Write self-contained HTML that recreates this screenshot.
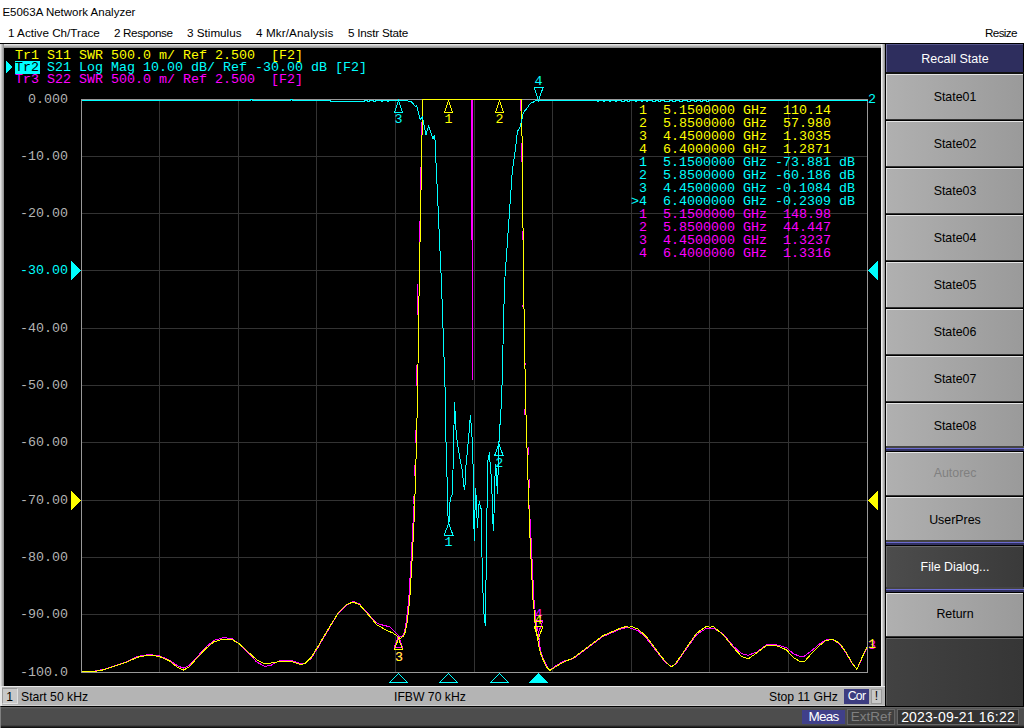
<!DOCTYPE html>
<html><head><meta charset="utf-8"><title>E5063A Network Analyzer</title>
<style>
html,body{margin:0;padding:0;background:#fff;}
body{width:1024px;height:728px;position:relative;overflow:hidden;font-family:"Liberation Sans",sans-serif;}
#root{position:absolute;left:0;top:0;width:1024px;height:728px;overflow:hidden;background:#fff;}
.abs{position:absolute;}
#title{left:2.4px;top:3.6px;font-size:11.5px;line-height:16px;color:#000;white-space:nowrap;}
.menu{top:25px;font-size:11.7px;line-height:16px;color:#000;white-space:nowrap;}
#topline{left:0;top:43px;width:1024px;height:1px;background:#000;}
#frame{left:0;top:44px;width:886px;height:662px;background:#000;}
#ftop{left:0;top:44px;width:885px;height:4px;background:linear-gradient(#eee,#888);}
#fleft{left:0;top:44px;width:4px;height:642px;background:linear-gradient(90deg,#eee,#888);}
#fleft2{left:0;top:686px;width:2px;height:20px;background:#e8e8e8;}
#fright{left:881px;top:44px;width:4px;height:646px;background:linear-gradient(90deg,#fff,#888);}
#plot{left:0;top:0;width:1024px;height:728px;}
#plot text{font-family:"Liberation Mono",monospace;font-size:13.333px;}
#status{left:2px;top:686px;width:883px;height:20px;background:#b4b4b4;border-top:1px solid #e8e8e8;box-sizing:border-box;font-size:12.2px;color:#000;border-bottom:1px solid #d0d0d0;}
#status span{position:absolute;top:2px;line-height:16px;white-space:nowrap;}
#side{left:886px;top:44px;width:137px;height:662px;background:linear-gradient(90deg,#424242,#363636);border-right:1px solid #000;box-sizing:content-box;}
#hdr{left:886px;top:44px;width:137px;height:28px;background:#2e2e5e;border-top:1px solid #55558a;border-left:1px solid #6a6a9a;box-sizing:border-box;color:#fff;font-size:12.5px;line-height:28px;text-align:center;}
.b{position:absolute;left:886px;width:137px;box-sizing:border-box;border-top:1px solid #e4e4e4;border-left:1px solid #e0e0e0;background:linear-gradient(90deg,#b0b0b0,#9a9a9a);box-shadow:0 1px 0 #333, 0 2px 0 #000;}
.bt{position:absolute;left:886px;width:138px;height:44px;color:#000;font-size:12.4px;line-height:44px;text-align:center;white-space:nowrap;}
.bt.dis{color:#808080;}
.bt.wh{color:#fff;}
.b.dk{background:linear-gradient(90deg,#4c4c4c,#3a3a3a);border-top-color:#6a6a6a;border-left-color:#6a6a6a;}
.sep{position:absolute;left:886px;width:138px;height:6px;background:#000;}
.sep i{position:absolute;left:0;top:0;width:138px;height:2px;background:#444;}
.sep b{position:absolute;left:0;top:2px;width:138px;height:3px;background:#30305e;border-top:1px solid #6a6ad0;box-sizing:border-box;}
#bbar{left:0;top:706px;width:1024px;height:22px;background:linear-gradient(#686868,#4d4d4d 2px,#4d4d4d 18px,#1a1a1a 20px,#0c0c0c 21px);border-top:1px solid #000;border-left:1px solid #808080;box-sizing:border-box;}
.tag{position:absolute;box-sizing:border-box;font-size:13.5px;line-height:14px;text-align:center;white-space:nowrap;}
</style></head><body><div id="root">
<div class="abs" id="title">E5063A Network Analyzer</div>
<div class="abs menu" style="left:8px">1 Active Ch/Trace</div>
<div class="abs menu" style="left:114px;letter-spacing:-0.37px">2 Response</div>
<div class="abs menu" style="left:187px">3 Stimulus</div>
<div class="abs menu" style="left:256px;letter-spacing:0.1px">4 Mkr/Analysis</div>
<div class="abs menu" style="left:348px;letter-spacing:-0.22px">5 Instr State</div>
<div class="abs menu" style="left:985px;letter-spacing:-0.65px">Resize</div>
<div class="abs" id="topline"></div>
<div class="abs" id="frame"></div>
<div class="abs" id="ftop"></div>
<div class="abs" id="fleft"></div>
<div class="abs" id="fright"></div>
<div class="abs" id="fleft2"></div>
<div class="abs" id="status">
<div class="abs" style="left:0px;top:1px;width:16px;height:16px;background:#c8c8c8;border:1px solid #9a9a9a;border-right-color:#e0e0e0;border-bottom-color:#e0e0e0;box-sizing:border-box"></div>
<span style="left:4.3px">1</span><span style="left:19px">Start 50 kHz</span><span style="left:392px">IFBW 70 kHz</span><span style="left:767px">Stop 11 GHz</span>
<div class="abs" style="left:842px;top:2px;width:25px;height:15px;background:#3c3c80;color:#fff;font-size:12.2px;line-height:15px;text-align:center;letter-spacing:-0.7px">Cor</div>
<div class="abs" style="left:869px;top:2px;width:11px;height:15px;background:#c8c8c8;border:1px solid #9a9a9a;box-sizing:border-box;font-size:12.2px;line-height:13px;text-align:center">!</div>
</div>
<div class="abs" id="side"></div>
<div class="abs" style="left:886px;top:72px;width:138px;height:2px;background:#111"></div>
<div class="abs" id="hdr">Recall State</div>
<div class="abs" style="left:886px;top:638px;width:137px;height:1px;background:#686868"></div><div class="abs" style="left:886px;top:639px;width:1px;height:66px;background:#5a5a5a"></div>
<div class="b" style="top:74px;height:45px"></div>
<div class="bt" style="top:75px">State01</div>
<div class="b" style="top:121px;height:45px"></div>
<div class="bt" style="top:122px">State02</div>
<div class="b" style="top:168px;height:45px"></div>
<div class="bt" style="top:169px">State03</div>
<div class="b" style="top:215px;height:45px"></div>
<div class="bt" style="top:216px">State04</div>
<div class="b" style="top:262px;height:45px"></div>
<div class="bt" style="top:263px">State05</div>
<div class="b" style="top:309px;height:45px"></div>
<div class="bt" style="top:310px">State06</div>
<div class="b" style="top:356px;height:45px"></div>
<div class="bt" style="top:357px">State07</div>
<div class="b" style="top:403px;height:43px"></div>
<div class="bt" style="top:404px">State08</div>
<div class="b" style="top:452px;height:43px"></div>
<div class="bt dis" style="top:451px">Autorec</div>
<div class="b" style="top:497px;height:44px"></div>
<div class="bt" style="top:498px">UserPres</div>
<div class="b dk" style="top:546px;height:42px"></div>
<div class="bt wh" style="top:545px">File Dialog...</div>
<div class="b" style="top:593px;height:43px"></div>
<div class="bt" style="top:592px">Return</div>
<div class="sep" style="top:446px"><i></i><b></b></div><div class="sep" style="top:540px"><i></i><b></b></div><div class="sep" style="top:587px"><i></i><b></b></div>
<div class="abs" id="bbar"></div>
<div class="tag" style="left:802px;top:710px;width:43px;height:14px;background:#40408a;color:#fff;letter-spacing:-0.7px;">Meas</div>
<div class="tag" style="left:847px;top:709px;width:48px;height:16px;background:#404040;color:#808080;border:1px solid #666;">ExtRef</div>
<div class="tag" style="left:897px;top:709px;width:122px;height:16px;background:#333;color:#fff;border:1px solid #666;font-size:14px;letter-spacing:0.2px;">2023-09-21 16:22</div>
<svg class="abs" id="plot" width="1024" height="728" viewBox="0 0 1024 728" shape-rendering="crispEdges">
<path d="M159.5 100V672M238.5 100V672M316.5 100V672M395.5 100V672M474.5 100V672M552.5 100V672M631.5 100V672M709.5 100V672M788.5 100V672M82 156.5H867M82 213.5H867M82 270.5H867M82 328.5H867M82 385.5H867M82 442.5H867M82 500.5H867M82 557.5H867M82 614.5H867" stroke="#333" fill="none"/>
<rect x="81.5" y="99.5" width="786" height="573" fill="none" stroke="#999"/>
<g stroke="#f0f" fill="none">
<polyline points="81.8,671.8 92.6,671.5 104.2,669.2 114.2,666.0 125.8,662.0 137.4,656.6 149.0,654.4 159.0,655.8 169.0,659.8 177.3,665.6 183.1,668.2 188.9,665.6 195.5,658.7 205.5,647.6 213.8,640.4 223.8,637.6 232.0,638.6 239.5,644.4 246.6,651.8 256.6,661.9 264.9,666.4 271.5,665.0 279.8,660.6 291.5,660.6 299.8,663.2 304.7,663.4 311.4,658.2 318.0,647.4 326.3,633.3 338.0,613.6 346.3,605.3 352.9,601.4 359.5,604.0 367.8,613.4 377.0,623.2 380.0,624.5 384.8,625.5 390.3,627.2 392.4,629.6 397.9,634.8 399.9,636.8 402.6,636.0 403.7,634.4 404.4,631.7 405.4,627.2 406.5,620.0 407.9,607.0 409.0,595.0 410.7,566.6 413.0,523.0 414.6,495.8"/>
<polyline points="529.3,505.0 531.0,537.7 533.5,590.0 534.0,600.0 535.1,610.3 535.8,620.6 537.5,629.0 538.5,632.6 540.3,650.0 542.4,656.4 547.2,667.0 549.9,670.2 554.9,666.4 563.2,661.2 573.2,658.6 586.4,648.9 603.0,636.5 619.6,629.5 627.1,627.4 631.3,628.4 637.9,630.6 646.2,638.0 656.2,651.0 664.5,661.4 671.1,666.4 676.1,663.8 686.1,649.3 696.0,635.4 700.0,632.3 706.6,628.2 713.3,628.0 723.2,634.0 733.2,646.0 741.5,653.6 748.1,655.2 756.4,652.3 766.4,644.8 776.4,644.8 786.3,647.6 793.0,653.4 799.6,656.4 804.6,656.0 811.2,651.0 819.5,644.0 826.2,639.7 832.8,639.5 839.5,643.9 846.1,653.1 852.7,664.5 856.9,669.0 861.0,660.5 866.8,648.3"/>
<path d="M421.5 121.6L421.5 134.5"/>
<path d="M420.5 166.8L420.5 196.6"/>
<path d="M419.5 220.9L419.5 256.9"/>
<path d="M417.5 284L417.5 314.5"/>
<path d="M416.5 364.6L416.5 385.7"/>
<path d="M415.5 430L415.5 443.4"/>
<path d="M414.5 465.3L414.5 475.5"/>
<path d="M413.5 495.8L413.5 503.6"/>
<path d="M520.5 100.2L520.5 110.8"/>
<path d="M521.5 143L521.5 161.8"/>
<path d="M522.5 231L522.5 239.6"/>
<path d="M522.5 304.7L522.5 306.7"/>
<path d="M525.5 363L525.5 365"/>
<path d="M524.5 409L524.5 415"/>
<path d="M528.5 447.3L528.5 454.7"/>
<path d="M529.5 479L529.5 487.5"/>
<path d="M529.5 505L529.5 512"/>
<path d="M472 100V240" stroke-width="2"/><path d="M472.5 240V380"/>
<polygon points="398.5,636.1 394.3,647.5 402.7,647.5" fill="none" stroke="#f0f"/>
<polygon points="538.5,632.6 534.1,620.6 542.9,620.6" fill="none" stroke="#f0f"/>
</g>
<text x="399.0" y="661.0" fill="#f0f" text-anchor="middle">3</text>
<text x="538.5" y="618.0" fill="#f0f" text-anchor="middle">4</text>
<text x="868" y="649" fill="#f0f">3</text>
<g stroke="#ff0" fill="none">
<polyline points="81.8,671.8 92.6,671.8 104.2,669.7 114.2,666.4 125.8,662.5 137.4,657.2 149.0,655.2 159.0,656.4 169.0,660.6 177.3,667.2 183.1,670.2 188.9,667.2 195.5,659.7 205.5,648.9 213.8,641.8 223.8,639.0 232.0,639.5 239.5,644.0 246.6,650.6 256.6,659.7 264.9,663.9 271.5,663.0 279.8,661.4 291.5,661.4 299.8,664.2 304.7,663.9 311.4,657.2 318.0,646.4 326.3,632.3 338.0,613.2 346.3,604.9 352.9,602.0 359.5,604.6 367.8,614.1 377.0,624.9 380.0,626.5 386.9,630.6 392.4,632.7 396.5,635.5 398.5,637.5 400.6,638.5 403.4,636.0 405.4,631.7 406.4,626.2 407.5,620.0 408.9,607.0 410.0,595.0 411.7,566.6 414.0,523.0 415.5,480.0 417.5,398.0 419.2,284.0 421.3,175.0 421.6,136.0 422.5,134.0 422.5,99.5 521.6,99.5 522.4,170.0 523.6,284.0 525.5,398.0 528.0,480.0 530.0,537.7 532.5,590.0 533.0,600.0 534.1,610.3 534.8,620.6 536.5,633.0 537.9,640.5 539.6,650.0 541.6,656.4 546.6,667.2 549.9,670.5 554.9,667.2 563.2,662.2 573.2,658.1 586.4,648.1 603.0,635.7 619.6,628.5 627.1,626.2 629.0,627.5 631.3,626.4 637.9,629.0 646.2,636.5 656.2,649.8 664.5,660.6 671.1,667.2 676.1,663.0 686.1,648.1 696.0,634.0 700.0,630.7 706.6,626.2 710.0,627.3 713.3,626.6 723.2,634.8 733.2,647.3 741.5,656.4 748.1,658.9 756.4,653.1 766.4,645.6 776.4,645.6 786.3,649.8 793.0,657.2 799.6,661.4 804.6,661.4 811.2,653.9 819.5,645.6 826.2,640.3 832.8,639.5 839.5,643.1 846.1,652.3 852.7,663.9 856.9,669.4 861.0,659.7 866.8,647.3"/>
<polygon points="448.5,100.5 444.5,112.5 452.5,112.5" fill="none" stroke="#ff0"/>
<polygon points="499.5,100.5 495.5,112.5 503.5,112.5" fill="none" stroke="#ff0"/>
<polygon points="398.5,638.5 394.3,649.9 402.7,649.9" fill="none" stroke="#ff0"/>
<polygon points="538.5,638.4 534.1,626.4 542.9,626.4" fill="none" stroke="#ff0"/>
</g>
<text x="448.5" y="123.0" fill="#ff0" text-anchor="middle">1</text>
<text x="499.5" y="123.0" fill="#ff0" text-anchor="middle">2</text>
<text x="399.0" y="661.0" fill="#ff0" text-anchor="middle">3</text>
<text x="538.5" y="623.7" fill="#ff0" text-anchor="middle">4</text>
<text x="868" y="648" fill="#ff0">1</text>
<g stroke="#0ff" fill="none">
<polyline points="81.5,100.5 250.5,100.5 250.5,99.5 252.5,99.5 252.5,100.5 290.5,100.5 290.5,99.5 292.5,99.5 292.5,100.5 330.0,100.5 330.0,101.5 364.0,101.5 364.0,100.5 367.5,100.5 367.5,101.5 369.0,101.5 369.0,100.5 373.5,100.5 373.5,101.5 375.5,101.5 375.5,100.5 381.3,100.5 381.3,101.5 382.2,101.5 382.2,100.5 387.3,100.5 387.3,101.5 388.2,101.5 388.2,100.5 407.0,100.5 408.9,101.5 411.3,101.5 412.3,102.8 415.2,106.2 416.7,105.7 420.2,119.3 422.5,117.0 426.0,134.5 428.6,126.3 433.0,139.2 434.5,135.1 435.6,145.1 436.0,162.7 436.6,175.0 441.5,284.0 445.4,398.0 445.7,431.6 446.9,471.6 447.7,511.0 448.5,524.0 449.0,522.7 449.5,507.8 450.4,498.0 452.0,495.5 453.0,470.0 454.0,426.0 454.3,402.0 455.0,410.5 456.3,435.6 460.2,460.6 462.2,470.0 463.1,478.8 464.4,489.8 465.3,482.3 465.3,471.3 466.5,460.6 468.9,434.0 470.4,415.0 472.0,437.0 473.2,468.4 473.5,516.0 474.5,541.0 475.4,487.6 476.3,499.0 477.0,517.5 477.6,527.6 478.5,507.8 479.4,501.2 480.3,506.9 481.4,509.5 481.4,535.0 482.5,575.0 483.5,609.0 484.6,620.0 485.5,626.0 485.5,586.0 486.4,575.0 486.4,508.7 487.5,507.0 487.7,470.0 487.3,463.7 489.5,452.0 490.4,470.0 491.2,475.3 492.1,495.5 492.6,517.5 493.4,530.6 494.0,514.0 494.8,481.4 495.5,463.7 496.5,472.6 497.0,485.8 497.4,493.7 497.8,477.0 498.7,470.0 498.6,460.6 498.9,443.4 500.2,421.5 501.7,398.0 504.5,284.0 512.4,170.0 514.6,155.3 515.7,147.1 517.3,131.9 520.4,126.0 522.2,117.8 523.4,112.5 526.9,108.4 530.4,103.2 532.7,102.6 535.7,100.5 597.0,100.5 597.0,101.5 598.0,101.5 598.0,100.5 603.0,100.5 603.0,101.5 604.0,101.5 604.0,100.5 609.0,100.5 609.0,101.5 610.0,101.5 610.0,100.5 615.0,100.5 615.0,101.5 616.0,101.5 616.0,100.5 621.3,100.5 621.3,101.5 624.2,101.5 624.2,100.5 627.0,100.5 627.0,101.5 629.0,101.5 629.0,100.5 635.0,100.5 635.0,101.5 636.0,101.5 636.0,100.5 641.0,100.5 641.0,101.5 642.0,101.5 642.0,100.5 646.5,100.5 646.5,101.5 647.5,101.5 647.5,100.5 652.5,100.5 652.5,101.5 655.0,101.5 655.0,100.5 658.4,100.5 658.4,101.5 660.8,101.5 660.8,100.5 664.2,100.5 664.2,101.5 669.0,101.5 669.0,100.5 672.5,100.5 672.5,101.5 675.0,101.5 675.0,100.5 679.8,100.5 679.8,101.5 682.8,101.5 682.8,100.5 687.7,100.5 687.7,101.5 690.5,101.5 690.5,100.5 694.0,100.5 694.0,101.5 696.0,101.5 696.0,100.5 700.0,100.5 700.0,101.5 702.0,101.5 702.0,100.5 706.0,100.5 706.0,101.5 708.0,101.5 708.0,100.5 867.5,100.5"/>
<polygon points="398.5,100.5 394.5,112.5 402.5,112.5" fill="none" stroke="#0ff"/>
<polygon points="448.6,523.5 444.2,535.2 453.0,535.2" fill="none" stroke="#0ff"/>
<polygon points="498.9,444.0 494.6,455.7 503.2,455.7" fill="none" stroke="#0ff"/>
<polygon points="538.6,100.5 534.2,87.5 543.0,87.5" fill="none" stroke="#0ff"/>
<polygon points="398.5,673.5 389.5,682.5 407.5,682.5"/>
<polygon points="448.6,673.5 439.6,682.5 457.6,682.5"/>
<polygon points="499.5,673.5 490.5,682.5 508.5,682.5"/>
</g>
<polygon points="538.6,673 529,683 548,683" fill="#0ff"/>
<text x="398.5" y="123.0" fill="#0ff" text-anchor="middle">3</text>
<text x="448.6" y="546.0" fill="#0ff" text-anchor="middle">1</text>
<text x="499.3" y="467.0" fill="#0ff" text-anchor="middle">2</text>
<text x="538.5" y="85.0" fill="#0ff" text-anchor="middle">4</text>
<text x="868" y="103" fill="#0ff">2</text>
<polygon points="71,261 71,280 81,270.5" fill="#0ff"/><polygon points="878,261 878,280 868,270.5" fill="#0ff"/>
<polygon points="71,491 71,510 81,500.5" fill="#ff0"/><polygon points="878,491 878,510 868,500.5" fill="#ff0"/>
<polygon points="6,61 6,73 12.3,67" fill="#0ff"/><rect x="15" y="61" width="25" height="13" fill="#0ff"/>
<text x="68" y="103" fill="#b4b4b4" text-anchor="end">0.000</text>
<text x="68" y="160" fill="#b4b4b4" text-anchor="end">-10.00</text>
<text x="68" y="217" fill="#b4b4b4" text-anchor="end">-20.00</text>
<text x="68" y="274" fill="#0ff" text-anchor="end">-30.00</text>
<text x="68" y="332" fill="#b4b4b4" text-anchor="end">-40.00</text>
<text x="68" y="389" fill="#b4b4b4" text-anchor="end">-50.00</text>
<text x="68" y="446" fill="#b4b4b4" text-anchor="end">-60.00</text>
<text x="68" y="504" fill="#b4b4b4" text-anchor="end">-70.00</text>
<text x="68" y="561" fill="#b4b4b4" text-anchor="end">-80.00</text>
<text x="68" y="618" fill="#b4b4b4" text-anchor="end">-90.00</text>
<text x="68" y="676" fill="#b4b4b4" text-anchor="end">-100.0</text>
<text x="15" y="58.5" fill="#ff0" xml:space="preserve">Tr1 S11 SWR 500.0 m/ Ref 2.500  [F2]</text>
<text x="15" y="70.5" fill="#0ff" xml:space="preserve"><tspan fill="#000">Tr2</tspan> S21 Log Mag 10.00 dB/ Ref -30.00 dB [F2]</text>
<text x="15" y="82.5" fill="#f0f" xml:space="preserve">Tr3 S22 SWR 500.0 m/ Ref 2.500  [F2]</text>
<text x="631" y="113.6" fill="#ff0" xml:space="preserve"> 1  5.1500000 GHz  110.14</text>
<text x="631" y="126.6" fill="#ff0" xml:space="preserve"> 2  5.8500000 GHz  57.980</text>
<text x="631" y="139.6" fill="#ff0" xml:space="preserve"> 3  4.4500000 GHz  1.3035</text>
<text x="631" y="152.6" fill="#ff0" xml:space="preserve"> 4  6.4000000 GHz  1.2871</text>
<text x="631" y="165.6" fill="#0ff" xml:space="preserve"> 1  5.1500000 GHz -73.881 dB</text>
<text x="631" y="178.6" fill="#0ff" xml:space="preserve"> 2  5.8500000 GHz -60.186 dB</text>
<text x="631" y="191.6" fill="#0ff" xml:space="preserve"> 3  4.4500000 GHz -0.1084 dB</text>
<text x="631" y="204.6" fill="#0ff" xml:space="preserve">&gt;4  6.4000000 GHz -0.2309 dB</text>
<text x="631" y="217.6" fill="#f0f" xml:space="preserve"> 1  5.1500000 GHz  148.98</text>
<text x="631" y="230.6" fill="#f0f" xml:space="preserve"> 2  5.8500000 GHz  44.447</text>
<text x="631" y="243.6" fill="#f0f" xml:space="preserve"> 3  4.4500000 GHz  1.3237</text>
<text x="631" y="256.6" fill="#f0f" xml:space="preserve"> 4  6.4000000 GHz  1.3316</text>
</svg>
</div></body></html>
